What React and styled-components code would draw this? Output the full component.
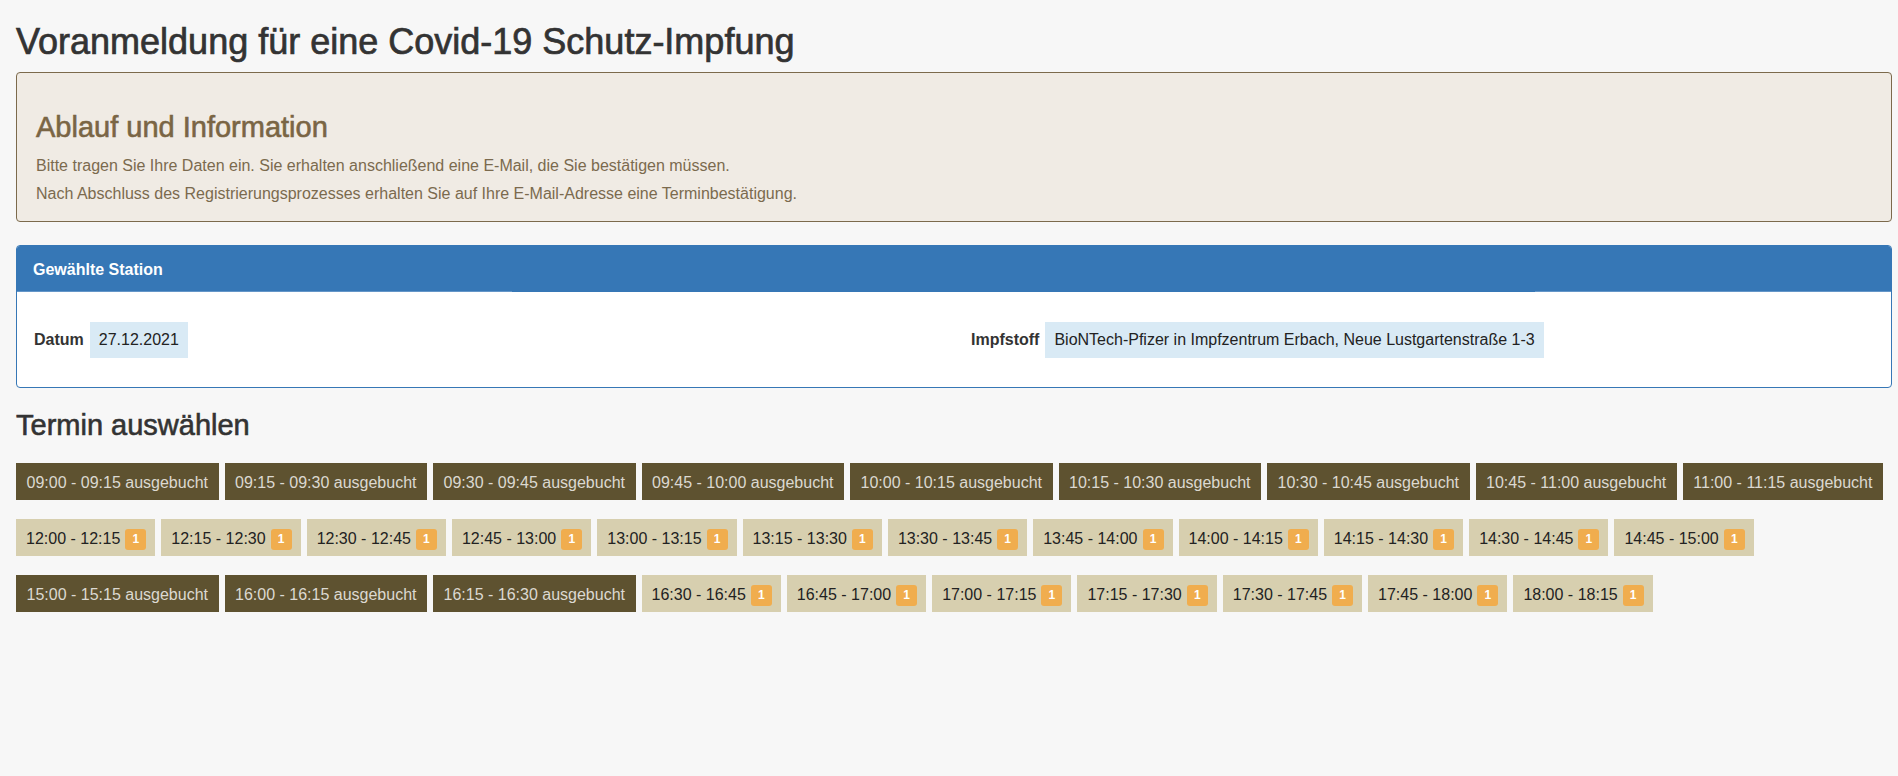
import React from "react";
import styled, { createGlobalStyle } from "styled-components";

const GlobalStyle = createGlobalStyle`
  html, body {
    margin: 0;
    padding: 0;
    background: #f7f7f7;
    font-family: "Liberation Sans", Arial, Helvetica, sans-serif;
    font-size: 16px;
    color: #333;
  }
  * { box-sizing: border-box; }
`;

const Page = styled.div`
  padding: 0 6px 0 16px;
`;

const Title = styled.h1`
  margin: 22px 0 10px;
  font-size: 36px;
  line-height: 40px;
  font-weight: 500;
  color: #333;
  -webkit-text-stroke: 0.7px #333;
`;

const Well = styled.div`
  background: #f0ebe4;
  border: 1px solid #7c6a4c;
  border-radius: 4px;
  padding: 19px 19px 17px;
  margin-bottom: 23px;
  color: #7b6a4e;
`;

const WellHeading = styled.h2`
  margin: 20px 0 12px;
  font-size: 29px;
  line-height: 1.1;
  font-weight: 500;
  color: #7a6544;
  -webkit-text-stroke: 0.6px #7a6544;
`;

const WellText = styled.p`
  margin: 0 0 8px;
  font-size: 16px;
  line-height: 20px;
  &:last-child { margin-bottom: 0; }
`;

const Panel = styled.div`
  background: #fff;
  border: 1px solid #3677b6;
  border-radius: 4px;
`;

const PanelHeading = styled.div`
  padding: 14px 16px 12px;
  font-size: 16px;
  line-height: 20px;
  font-weight: 700;
  color: #fff;
  border-radius: 3px 3px 0 0;
  background:
    linear-gradient(to right, #6496c8 0 26.4%, #3677b6 26.4% 81%, #6496c8 81% 100%) bottom / 100% 1px no-repeat,
    #3677b6;
`;

const PanelBody = styled.div`
  display: grid;
  grid-template-columns: 1fr 1fr;
  padding: 30px 0 29px;
`;

const Field = styled.div`
  display: flex;
  align-items: center;
  gap: 6px;
  padding: 0 17px;
`;

const FieldLabel = styled.span`
  font-size: 16px;
  font-weight: 700;
  color: #333;
  line-height: 20px;
`;

const FieldValue = styled.span`
  background: #d9eaf5;
  padding: 8px 9px;
  font-size: 16px;
  line-height: 20px;
  color: #222;
`;

const SectionTitle = styled.h3`
  margin: 22px 0 21px;
  font-size: 29px;
  line-height: 1.1;
  font-weight: 500;
  color: #333;
  -webkit-text-stroke: 0.6px #333;
`;

const SlotList = styled.div`
  display: flex;
  flex-wrap: wrap;
  gap: 19px 6px;
`;

const Slot = styled.div`
  display: flex;
  align-items: flex-start;
  gap: 5px;
  height: 37px;
  padding: ${(p) => (p.$booked ? "10px 10.5px 7px" : "10px 9px 7px 10px")};
  font-size: 16px;
  line-height: 20px;
  white-space: nowrap;
  background: ${(p) => (p.$booked ? "#5e5230" : "#d7cfaf")};
  color: ${(p) => (p.$booked ? "#dcd9d1" : "#222")};
`;

const Badge = styled.span`
  display: inline-flex;
  align-items: center;
  justify-content: center;
  width: 21px;
  height: 21px;
  border-radius: 3px;
  background: #f0ad4e;
  color: #fff;
  font-size: 12px;
  font-weight: 700;
  line-height: 1;
`;

const slots = [
  ["09:00", "09:15", true],
  ["09:15", "09:30", true],
  ["09:30", "09:45", true],
  ["09:45", "10:00", true],
  ["10:00", "10:15", true],
  ["10:15", "10:30", true],
  ["10:30", "10:45", true],
  ["10:45", "11:00", true],
  ["11:00", "11:15", true],
  ["12:00", "12:15", false],
  ["12:15", "12:30", false],
  ["12:30", "12:45", false],
  ["12:45", "13:00", false],
  ["13:00", "13:15", false],
  ["13:15", "13:30", false],
  ["13:30", "13:45", false],
  ["13:45", "14:00", false],
  ["14:00", "14:15", false],
  ["14:15", "14:30", false],
  ["14:30", "14:45", false],
  ["14:45", "15:00", false],
  ["15:00", "15:15", true],
  ["16:00", "16:15", true],
  ["16:15", "16:30", true],
  ["16:30", "16:45", false],
  ["16:45", "17:00", false],
  ["17:00", "17:15", false],
  ["17:15", "17:30", false],
  ["17:30", "17:45", false],
  ["17:45", "18:00", false],
  ["18:00", "18:15", false],
];

export default function App() {
  return (
    <>
      <GlobalStyle />
      <Page>
        <Title>Voranmeldung für eine Covid-19 Schutz-Impfung</Title>
        <Well>
          <WellHeading>Ablauf und Information</WellHeading>
          <WellText>
            Bitte tragen Sie Ihre Daten ein. Sie erhalten anschließend eine E-Mail, die Sie bestätigen müssen.
          </WellText>
          <WellText>
            Nach Abschluss des Registrierungsprozesses erhalten Sie auf Ihre E-Mail-Adresse eine Terminbestätigung.
          </WellText>
        </Well>
        <Panel>
          <PanelHeading>Gewählte Station</PanelHeading>
          <PanelBody>
            <Field>
              <FieldLabel>Datum</FieldLabel>
              <FieldValue>27.12.2021</FieldValue>
            </Field>
            <Field>
              <FieldLabel>Impfstoff</FieldLabel>
              <FieldValue>BioNTech-Pfizer in Impfzentrum Erbach, Neue Lustgartenstraße 1-3</FieldValue>
            </Field>
          </PanelBody>
        </Panel>
        <SectionTitle>Termin auswählen</SectionTitle>
        <SlotList>
          {slots.map(([from, to, booked]) => (
            <Slot key={from} $booked={booked}>
              <span>
                {from} - {to}
                {booked ? " ausgebucht" : ""}
              </span>
              {!booked && <Badge>1</Badge>}
            </Slot>
          ))}
        </SlotList>
      </Page>
    </>
  );
}
